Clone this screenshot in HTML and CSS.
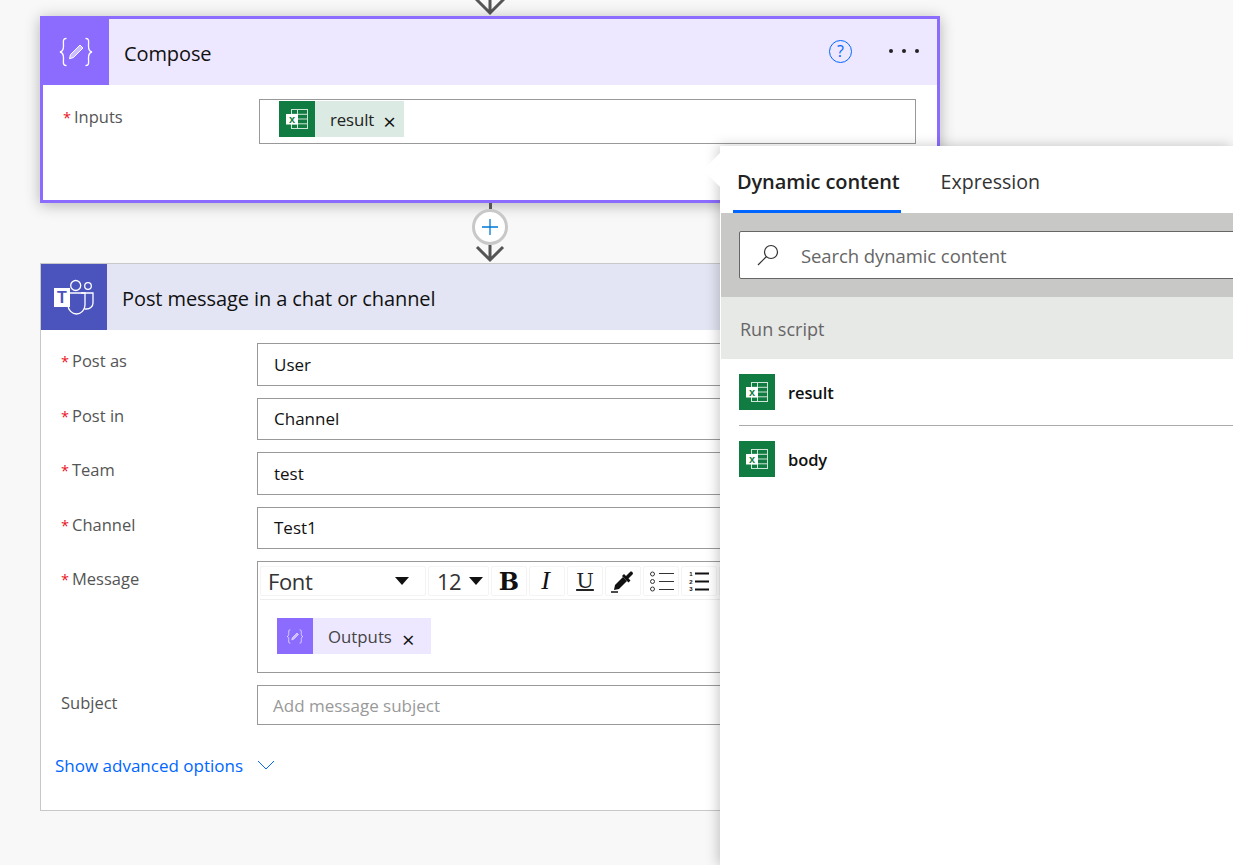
FILE: index.html
```html
<!DOCTYPE html>
<html lang="en">
<head>
<meta charset="utf-8">
<title>Flow designer</title>
<link rel="stylesheet" href="styles.css">
</head>
<body>
<svg class="defs" width="0" height="0" aria-hidden="true">
  <symbol id="excel" viewBox="0 0 36 36">
    <rect width="36" height="36" fill="#107c41"/>
    <g fill="none" stroke="#cfe5d8" stroke-width="1">
      <rect x="12.5" y="8.5" width="16" height="19"/>
      <path d="M18.5 8.5v19M12.5 13.3h16M12.5 18h16M12.5 22.8h16"/>
    </g>
    <rect x="7" y="13" width="12" height="10.5" fill="#fff"/>
  </symbol>
  <symbol id="braces" viewBox="0 0 34 30">
    <g fill="none" stroke="#fff" stroke-width="1.3" stroke-linecap="round">
      <path d="M7 1.5C3.5 1.5 4.5 5 4.5 9c0 4-1 5.500-3.500 6 2.500.5 3.500 2 3.500 6 0 4-1 7.500 2.500 7.500"/>
      <path d="M27 1.500c3.500 0 2.500 3.500 2.500 7.500 0 4 1 5.500 3.500 6-2.500.5-3.500 2-3.500 6 0 4 1 7.500-2.500 7.500"/>
    </g>
    <path d="M21 8l3 3-9.500 9.500-4 1.200 1-4.200z" fill="#fff" fill-opacity=".55" stroke="#fff" stroke-width="1" stroke-linejoin="round"/>
  </symbol>
</svg>

<main class="canvas">
  <div class="connector connector-top">
    <svg class="arrow-top" width="30" height="16" viewBox="0 0 30 16"><path d="M15 0v13M1 -1l14 14L29 -1" fill="none" stroke="#555" stroke-width="3"/></svg>
  </div>

  <section class="card card-selected">
    <header class="card-head head-compose">
      <div class="card-icon icon-compose"><svg width="34" height="30"><use href="#braces"/></svg></div>
      <h2 class="card-title">Compose</h2>
      <div class="card-actions">
        <span class="help">?</span>
        <span class="dots"><i></i><i></i><i></i></span>
      </div>
    </header>
    <div class="card-body compose-body">
      <div class="row">
        <label class="label"><span class="req">*</span>Inputs</label>
        <div class="field field-token">
          <span class="token token-excel">
            <svg class="token-icon" width="36" height="36"><use href="#excel"/><text x="13" y="22" class="excel-x">x</text></svg>
            <span class="token-text">result</span>
            <span class="token-x">×</span>
          </span>
        </div>
      </div>
    </div>
  </section>

  <div class="connector connector-add">
    <span class="stem"></span>
    <span class="add"><svg width="18" height="18" viewBox="0 0 18 18"><path d="M9 1v16M1 9h16" stroke="#0078d4" stroke-width="1.3" fill="none"/></svg></span>
    <svg class="add-arrow" width="30" height="18" viewBox="0 0 30 18"><path d="M15 0v15M2 2l13 13L28 2" fill="none" stroke="#555" stroke-width="3"/></svg>
  </div>

  <section class="card card-teams">
    <header class="card-head head-teams">
      <div class="card-icon icon-teams">
        <svg width="40" height="36" viewBox="0 0 40 36">
          <g fill="none" stroke="#fff" stroke-width="1.3">
            <circle cx="21.7" cy="6.5" r="5"/>
            <circle cx="34" cy="7" r="3.3"/>
            <path d="M27 14h12v10c0 3.500-3 6-6.500 6h-1.500"/>
            <path d="M14 14h17v12c0 5-4 9-8.500 9S14 31 14 26z"/>
          </g>
          <rect x="0" y="9" width="16" height="19" fill="#fff"/>
          <text x="8" y="24" class="teams-t">T</text>
        </svg>
      </div>
      <h2 class="card-title title-teams">Post message in a chat or channel</h2>
    </header>
    <div class="card-body teams-body">
      <div class="row"><label class="label"><span class="req">*</span>Post as</label><div class="field field-input">User</div></div>
      <div class="row"><label class="label"><span class="req">*</span>Post in</label><div class="field field-input">Channel</div></div>
      <div class="row"><label class="label"><span class="req">*</span>Team</label><div class="field field-input">test</div></div>
      <div class="row"><label class="label"><span class="req">*</span>Channel</label><div class="field field-input">Test1</div></div>
      <div class="row">
        <label class="label"><span class="req">*</span>Message</label>
        <div class="field field-editor">
          <div class="toolbar">
            <span class="tool tool-font">Font<i class="caret"></i></span>
            <span class="tool tool-size">12<i class="caret"></i></span>
            <span class="tool tool-b">B</span>
            <span class="tool tool-i">I</span>
            <span class="tool tool-u">U</span>
            <span class="tool">
              <svg width="24" height="23" viewBox="0 0 24 23"><path d="M0 22h7" stroke="#111" stroke-width="1.5"/><path d="M3 20l1-5 8-8 4 4-8 8z" fill="#111"/><path d="M11 6l2-2 2 2 4-4c1.500-1.500 4 1 2.500 2.500l-4 4 2 2-2 2z" fill="#111"/></svg>
            </span>
            <span class="tool">
              <svg width="25" height="21" viewBox="0 0 25 21"><g fill="none" stroke="#333"><circle cx="3.500" cy="3" r="2"/><circle cx="3.500" cy="10.500" r="2"/><circle cx="3.500" cy="18" r="2"/><path d="M10 2.500h15M10 10.500h15M10 18.500h15"/></g></svg>
            </span>
            <span class="tool">
              <svg width="20" height="21" viewBox="0 0 20 21"><path d="M6 2.500h14M6 10.500h14M6 18.500h14" stroke="#111" stroke-width="2" fill="none"/><text x="2" y="5" class="num">1</text><text x="2" y="12.500" class="num">2</text><text x="2" y="20" class="num">3</text></svg>
            </span>
            <span class="tool"></span>
          </div>
          <div class="editor-body">
            <span class="token token-compose">
              <span class="token-icon icon-compose"><svg width="18" height="15"><use href="#braces"/></svg></span>
              <span class="token-text token-outputs">Outputs</span>
              <span class="token-x">×</span>
            </span>
          </div>
        </div>
      </div>
      <div class="row"><label class="label">Subject</label><div class="field field-input field-subject">Add message subject</div></div>
      <div class="advanced">
        <span>Show advanced options</span>
        <svg width="18" height="10" viewBox="0 0 18 10"><path d="M1 1l8 8 8-8" fill="none" stroke="#06f" stroke-width="1"/></svg>
      </div>
    </div>
  </section>
</main>

<aside class="panel">
  <span class="panel-beak"></span>
  <nav class="tabs">
    <span class="tab tab-active">Dynamic content</span>
    <span class="tab tab-plain">Expression</span>
  </nav>
  <div class="search-band">
    <div class="search">
      <svg width="24" height="24" viewBox="0 0 24 24"><circle cx="15" cy="9" r="6.5" fill="none" stroke="#333" stroke-width="1.2"/><path d="M10.500 13.500L2 22" stroke="#333" stroke-width="1.2"/></svg>
      <span>Search dynamic content</span>
    </div>
  </div>
  <div class="group-head">Run script</div>
  <ul class="items">
    <li class="item"><svg width="36" height="36"><use href="#excel"/><text x="13" y="22" class="excel-x">x</text></svg><span>result</span></li>
    <li class="item"><svg width="36" height="36"><use href="#excel"/><text x="13" y="22" class="excel-x">x</text></svg><span>body</span></li>
  </ul>
</aside>
</body>
</html>
```
FILE: styles.css
```css
* { box-sizing: border-box; }
html, body { margin: 0; height: 100%; }
body {
  position: relative;
  overflow: hidden;
  background: #f8f8f8;
  font-family: "Open Sans", "Noto Sans", sans-serif;
  font-size: 16px;
  color: #111;
}
.defs { position: absolute; }
.canvas { width: 900px; margin-left: 40px; display: flex; flex-direction: column; }

.connector { display: flex; flex-direction: column; align-items: center; }
.connector-top { height: 16px; }
.arrow-top { flex: none; }
.connector-add { height: 60px; }
.stem { width: 3px; height: 6px; background: #555; flex: none; }
.add {
  width: 36px; height: 36px; flex: none;
  border: 3px solid #c8c8c8; border-radius: 50%;
  background: #fff;
  display: flex; align-items: center; justify-content: center;
}
.add-arrow { flex: none; }

.card { background: #fff; display: flex; flex-direction: column; }
.card-selected { border: 3px solid #8c6cff; box-shadow: 0 2px 14px rgba(0,0,0,.28); height: 187px; }
.card-teams { border: 1px solid #c8c8c8; height: 548px; }
.card-head { display: flex; align-items: center; height: 66px; flex: none; }
.head-compose { background: #ede8ff; }
.head-teams { background: #e3e5f4; }
.card-icon { width: 66px; height: 66px; flex: none; display: flex; align-items: center; justify-content: center; }
.icon-compose { background: #8c6cff; }
.head-compose .card-icon { height: 69px; margin: -3px 0 0 -3px; width: 69px; padding: 3px 0 0 3px; }
.icon-teams { background: #4b53bc; }
.card-title { margin: 2px 0 0 15px; font-size: 20px; font-weight: 400; color: #111; flex: 1; letter-spacing: -.1px; }
.title-teams { margin-left: 15px; letter-spacing: -.09px; }
.card-actions { display: flex; align-items: center; padding-right: 18px; gap: 37px; margin-top: -1px; }
.help {
  width: 23px; height: 23px; border: 1.5px solid #06f; border-radius: 50%;
  color: #06f; font-size: 16px; line-height: 20px; text-align: center;
}
.dots { display: flex; gap: 9px; margin-top: -2px; }
.dots i { width: 4px; height: 4px; border-radius: 50%; background: #222; display: block; }

.card-body { display: flex; flex-direction: column; padding-left: 20px; }
.compose-body { padding: 14px 21px 0 20px; }
.teams-body { padding-top: 13px; gap: 12px; }
.row { display: flex; align-items: flex-start; }
.label { width: 196px; flex: none; color: #555; font-size: 16.5px; padding-top: 6px; }
.req { color: #e81123; margin-right: 3px; font-size: 14.5px; }

.field { border: 1px solid #999; background: #fff; flex: 1; }
.field-token { height: 45px; padding: 1px 19px; display: flex; }
.field-input { height: 42.5px; padding: 0 16px; display: flex; align-items: center; font-size: 17px; }
.field-subject { height: 40px; color: #999; padding-left: 15px; }
.field-editor { height: 112px; display: flex; flex-direction: column; padding: 4px 2px 0 2px; }

.token { display: inline-flex; align-items: center; height: 36px; flex: none; }
.token-excel { background: #dbeae3; width: 125px; }
.token-compose { background: #ede8ff; width: 154px; }
.token-icon { width: 36px; height: 36px; flex: none; display: flex; align-items: center; justify-content: center; }
.token-text { margin-left: 15px; font-size: 16.8px; letter-spacing: -.1px; color: #222; }
.token-outputs { color: #444; letter-spacing: 0; }
.token-x { margin-left: 9px; font-size: 22px; line-height: 1; color: #111; padding-top: 3px; }
.token-compose .token-x { margin-left: 10px; padding-top: 6px; }

.toolbar { display: flex; gap: 2px; height: 34px; border-bottom: 1px solid #eee; flex: none; }
.tool {
  width: 36px; height: 30px; flex: none; border: 1px solid #f4f4f4; border-radius: 2px;
  display: flex; align-items: center; justify-content: center;
  color: #333;
}
.tool-font { width: 166px; font-size: 22px; justify-content: space-between; padding: 0 16px 0 7px; letter-spacing: -.4px; }
.tool-size { width: 61px; font-size: 22px; justify-content: space-between; padding: 0 5px 0 8px; letter-spacing: -.5px; }
.caret { width: 0; height: 0; border-left: 7px solid transparent; border-right: 7px solid transparent; border-top: 8px solid #111; display: block; }
.tool-b { font-family: "DejaVu Serif", serif; font-weight: 700; font-size: 24px; color: #111; }
.tool-i { font-family: "Liberation Serif", serif; font-style: italic; font-size: 26px; color: #111; padding-right: 3px; }
.tool-u { font-family: "DejaVu Serif", serif; font-size: 21px; text-decoration: underline; text-decoration-thickness: 1.5px; text-underline-offset: 1px; color: #222; }
.num { font-family: "Liberation Sans", sans-serif; font-size: 6px; font-weight: 700; text-anchor: middle; fill: #111; }
.editor-body { padding: 18px 0 0 17px; }

.advanced { display: flex; align-items: center; gap: 14px; margin: 16px 0 0 -6px; height: 24px; color: #06f; font-size: 17px; }

.excel-x { font-family: "Liberation Sans", sans-serif; font-weight: 700; font-size: 11px; fill: #107c41; text-anchor: middle; }
.teams-t { font-family: "Liberation Sans", sans-serif; font-weight: 700; font-size: 16px; fill: #4b53bc; text-anchor: middle; }

.panel {
  position: absolute; left: 720px; top: 146px; width: 513px; bottom: 0;
  background: #fff; padding-left: 1px;
  box-shadow: -2px 0 12px rgba(0,0,0,.22);
  display: flex; flex-direction: column;
}
.panel-beak {
  position: absolute; left: -12px; top: 12px; width: 24px; height: 24px;
  background: #fff; transform: rotate(45deg);
  clip-path: polygon(0 0, 100% 100%, -40% 140%, -40% 0);
}
.tabs { display: flex; height: 67px; flex: none; padding-left: 12px; gap: 36px; position: relative; }
.tab { height: 67px; padding: 22px 4px 0; font-size: 20px; color: #333; }
.tab-active { font-weight: 600; border-bottom: 3px solid #06f; color: #222; letter-spacing: -.12px; padding-right: 1px; }
.tab-plain { font-size: 19.6px; }
.search-band { height: 84px; flex: none; background: #c8c9c6; padding: 18px 0 0 18px; overflow: hidden; }
.search {
  width: 600px; height: 48px; background: #fff; border: 1px solid #666; border-radius: 2px;
  display: flex; align-items: center; gap: 21px; padding-left: 16px;
  color: #666; font-size: 18.5px; letter-spacing: -.08px;
}
.group-head { height: 62px; flex: none; background: #e7e9e6; padding: 2px 0 0 19px; display: flex; align-items: center; color: #666; font-size: 18px; }
.items { list-style: none; margin: 0; padding: 15px 0 0 18px; display: flex; flex-direction: column; }
.item { display: flex; align-items: center; gap: 13px; font-weight: 600; font-size: 16.5px; letter-spacing: -.1px; color: #111; height: 36px; }
.item + .item { margin-top: 31px; position: relative; }
.item + .item::before { content: ""; position: absolute; left: 0; right: 0; top: -16px; border-top: 1px solid #aaa; }
```
